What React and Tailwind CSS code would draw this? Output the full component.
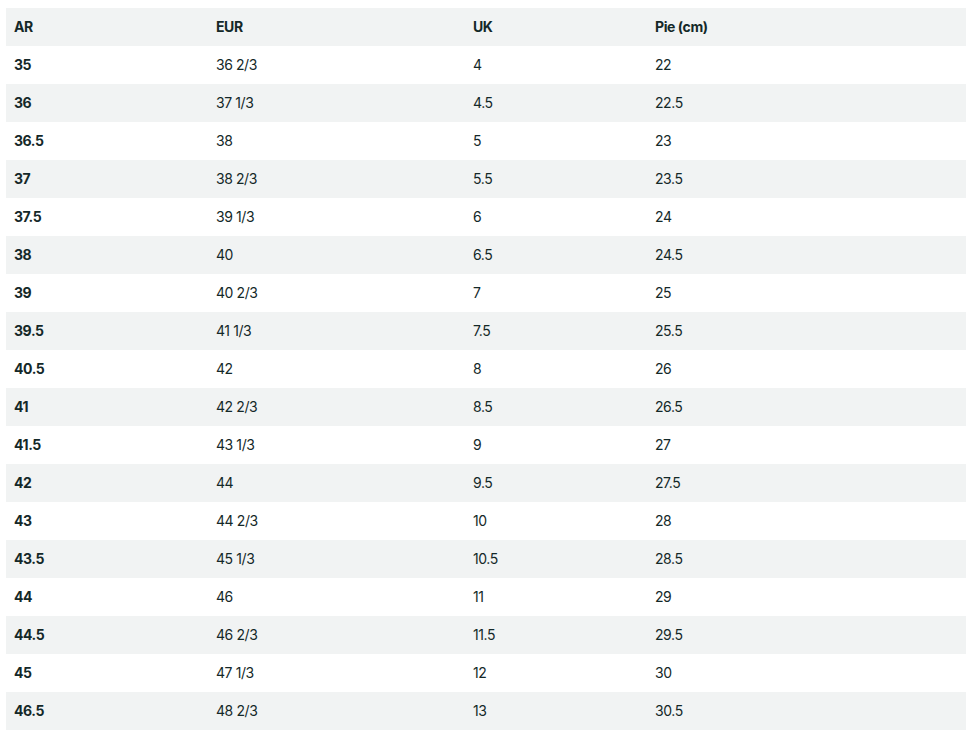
import React from 'react';

const rows = [
    ['35', '36 2/3', '4', '22'],
    ['36', '37 1/3', '4.5', '22.5'],
    ['36.5', '38', '5', '23'],
    ['37', '38 2/3', '5.5', '23.5'],
    ['37.5', '39 1/3', '6', '24'],
    ['38', '40', '6.5', '24.5'],
    ['39', '40 2/3', '7', '25'],
    ['39.5', '41 1/3', '7.5', '25.5'],
    ['40.5', '42', '8', '26'],
    ['41', '42 2/3', '8.5', '26.5'],
    ['41.5', '43 1/3', '9', '27'],
    ['42', '44', '9.5', '27.5'],
    ['43', '44 2/3', '10', '28'],
    ['43.5', '45 1/3', '10.5', '28.5'],
    ['44', '46', '11', '29'],
    ['44.5', '46 2/3', '11.5', '29.5'],
    ['45', '47 1/3', '12', '30'],
    ['46.5', '48 2/3', '13', '30.5'],
];

const App = () => {
    return (
        <div className="bg-white min-h-screen px-[6px] pt-[8px]" style={{ fontFamily: 'Inter, "Liberation Sans", sans-serif' }}>
            <table className="w-[960px] border-collapse text-[14px] text-[#142828] tracking-[-0.03em]">
                <colgroup>
                    <col className="w-[202px]" />
                    <col className="w-[257px]" />
                    <col className="w-[182px]" />
                    <col className="w-[319px]" />
                </colgroup>
                <thead>
                    <tr className="bg-[#f1f3f3] h-[38px]">
                        <th className="text-left font-bold px-2 pb-[2px]">AR</th>
                        <th className="text-left font-bold px-2 pb-[2px]">EUR</th>
                        <th className="text-left font-bold px-2 pb-[2px]">UK</th>
                        <th className="text-left font-bold px-2 pb-[2px]">Pie (cm)</th>
                    </tr>
                </thead>
                <tbody>
                    {rows.map((r, i) => (
                        <tr key={r[0]} className={`h-[38px] ${i % 2 === 1 ? 'bg-[#f1f3f3]' : 'bg-white'}`}>
                            <td className="px-2 pb-[2px] font-bold">{r[0]}</td>
                            <td className="px-2 pb-[2px]">{r[1]}</td>
                            <td className="px-2 pb-[2px]">{r[2]}</td>
                            <td className="px-2 pb-[2px]">{r[3]}</td>
                        </tr>
                    ))}
                </tbody>
            </table>
        </div>
    );
};

export default App;
